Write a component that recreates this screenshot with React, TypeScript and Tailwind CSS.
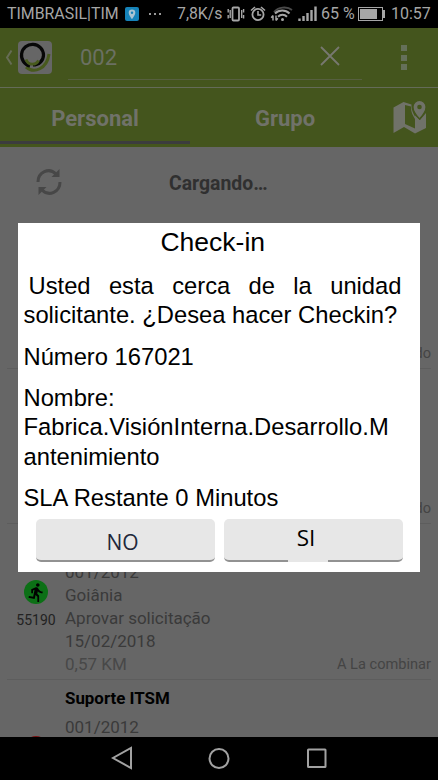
import React from "react";
import { MdDirectionsRun } from "react-icons/md";

function StatusBar() {
  return (
    <div className="flex h-7 shrink-0 items-center bg-black pl-[7px] text-[16px] leading-7 whitespace-nowrap text-[#a6a6a6]">
      <span className="w-[118px] text-[15.900px]">TIMBRASIL|TIM</span>
      <span className="flex h-[14px] w-[14px] items-center justify-center rounded-[2px] bg-[#1683b9]">
        <svg viewBox="0 0 14 14" className="h-[14px] w-[14px]">
          <path d="M7 2.400a3.300 3.300 0 0 0-3.300 3.300C3.700 8.200 7 12 7 12s3.300-3.800 3.300-6.300A3.300 3.300 0 0 0 7 2.400z" fill="#a9c4d2" />
          <circle cx="7" cy="5.700" r="1.200" fill="#1683b9" />
        </svg>
      </span>
      <span className="ml-[10px] flex w-[28px] gap-[3px]">
        <i className="h-[2px] w-[2px] bg-[#999]" />
        <i className="h-[2px] w-[2px] bg-[#999]" />
        <i className="h-[2px] w-[2px] bg-[#999]" />
      </span>
      <span className="w-[50px] text-[15.800px]">7,8K/s</span>
      <svg viewBox="227 4 92 20" className="h-5 w-[92px] shrink-0" fill="none" stroke="#a6a6a6" strokeWidth="1.800">
        <rect x="232.500" y="7.500" width="6.500" height="13" rx="1" />
        <path d="M230.200 10v8M241.700 10v8M228.200 9v3.500M228.200 15v3.500M243.600 9v3.500M243.600 15v3.500" strokeWidth="1.400" />
        <circle cx="258" cy="14.500" r="5.600" />
        <path d="M258 11v4h3.200M251 10.500l4-3.500M265 10.500l-4-3.500" strokeWidth="1.600" />
        <path d="M274 12c4-5 13-6 18-2" stroke="#4a4a4a" />
        <path d="M275 13.500c4-4 10.500-4 14.500 0M278 16.700c2.500-2.500 6.500-2.500 9 0" strokeWidth="2" />
        <circle cx="282.500" cy="19.500" r="1.500" fill="#a6a6a6" stroke="none" />
        <path d="M273 20.500v-5m-1.800 2.300l1.800-2.300M276 15.500v5m0 0l1.800-2.300" strokeWidth="1.500" />
        <path d="M299.500 18.500V21M303.500 16V21M307.500 13v8M311.500 10v11M315.500 6.500V21" strokeWidth="2.400" />
      </svg>
      <span className="ml-[2px] w-[37px] text-[16px]">65 %</span>
      <span className="flex h-[14px] w-[25px] items-center border-[1.500px] border-[#a6a6a6] p-[1px]">
        <span className="h-full w-[17px] bg-[#a6a6a6]" />
      </span>
      <span className="h-[8px] w-[2px] bg-[#a6a6a6]" />
      <span className="ml-[6px]">10:57</span>
    </div>
  );
}

function ActionBar() {
  return (
    <div className="flex h-[60px] shrink-0 border-b border-[#646b58]">
      <svg viewBox="0 0 8 16" className="mt-[21px] ml-[5px] h-[17px] w-[8px]" fill="none" stroke="#666c55" strokeWidth="2">
        <path d="M6.500 1L2 8l4.500 7" />
      </svg>
      <div className="mt-[13px] ml-[5px] h-[33px] w-[34px] rounded-[4px] bg-[#666]">
        <svg viewBox="0 0 34 33" className="h-full w-full" fill="none">
          <path d="M8 26C16 33 29 28 31 13" stroke="#485a1d" strokeWidth="3" />
          <path d="M12 25A11 11 0 1 1 25.500 14c0 6-5 10-10.500 10" stroke="#070707" strokeWidth="3.200" />
          <path d="M8 18.500c2 6 10 6 12.500 1" stroke="#485a1d" strokeWidth="2.800" />
        </svg>
      </div>
      <div className="mt-[14px] ml-[16px] flex h-[38px] w-[294px] items-start justify-between border-b border-[#565f40] pl-[12px]">
        <span className="text-[22px] leading-[32px] text-[#6b7062]">002</span>
        <svg viewBox="0 0 20 20" className="mt-[4px] mr-[22px] h-[20px] w-[20px]" stroke="#777870" strokeWidth="1.800">
          <path d="M1 1l18 18M19 1L1 19" />
        </svg>
      </div>
      <div className="mt-[17px] ml-[39px] flex flex-col gap-[3.500px]">
        <i className="h-[6px] w-[6px] bg-[#65705a]" />
        <i className="h-[6px] w-[6px] bg-[#65705a]" />
        <i className="h-[6px] w-[6px] bg-[#65705a]" />
      </div>
    </div>
  );
}

function Tabs() {
  return (
    <div className="flex h-[59px] shrink-0 text-[22px] font-bold text-[#707269]">
      <div className="flex w-[190px] flex-col justify-between pb-[3px] text-center">
        <span className="mt-[15px] leading-[32px]">Personal</span>
        <span className="h-[3px] bg-[#3c3c3e]" />
      </div>
      <span className="mt-[15px] w-[190px] text-center leading-[32px]">Grupo</span>
      <svg viewBox="0 0 34 34" className="mt-[12px] ml-[13px] h-[34px] w-[34px]">
        <path fill="#707269" d="M0.500 7.500L10.500 2l8 2.500c-.500 5 2.500 10 3.500 12v-1l5 4.500 6-7v15l-11 5.500-11-6.500-10.500 6z" />
        <path d="M12 5l6 1.500v1.500c0 4 2 8 4 11v9.500l-10-4.500z" fill="#44551d" />
        <path fill="#707269" stroke="#44551d" strokeWidth="1.200" d="M26.500.500a6.500 6.500 0 0 0-6.500 6.500c0 5 6.500 12 6.500 12s6.500-7 6.500-12a6.500 6.500 0 0 0-6.500-6.500z" />
        <circle cx="26.500" cy="7" r="2.300" fill="#44551d" />
      </svg>
    </div>
  );
}

type Item = {
  badge?: "green" | "red";
  code?: string;
  title?: string;
  lines: string[];
  distance?: string;
  status?: string;
};

const items: Item[] = [
  { lines: [], status: "do" },
  { lines: [], status: "do" },
  {
    badge: "green",
    code: "55190",
    lines: ["001/2012", "Goiânia", "Aprovar solicitação", "15/02/2018"],
    distance: "0,57 KM",
    status: "A La combinar",
  },
  { badge: "red", title: "Suporte ITSM", lines: ["001/2012"] },
];

function Row({ badge, code, title, lines, distance, status }: Item) {
  return (
    <div className="ml-[7px] flex h-[155.500px] w-[424px] shrink-0 border-b border-[#5d5d5d] text-[#3a3a3a]">
      <div className="flex w-[58px] flex-col items-center pt-[56px]">
        {badge && (
          <span className={badge === "green" ? "flex h-[24px] w-[24px] items-center justify-center rounded-full bg-[#0c7016]" : "flex h-[24px] w-[24px] items-center justify-center rounded-full bg-[#780d0d]"}>
            <MdDirectionsRun className="h-[21px] w-[21px] text-black" />
          </span>
        )}
        <span className="mt-[6px] text-[14px] leading-[20px] text-[#222]">{code}</span>
      </div>
      <div className="flex flex-1 flex-col text-[17px] leading-[23px] whitespace-nowrap">
        <div className="mt-[7px] mb-[6.500px] h-[23px] text-[16.900px] font-bold text-black">{title}</div>
        {lines.map((line) => (
          <span key={line}>{line}</span>
        ))}
        <span className="text-[#484848]">{distance}</span>
      </div>
      <span className="self-end pb-[5px] text-[14.600px] leading-[20px] text-[#444]">{status}</span>
    </div>
  );
}

function CheckinDialog() {
  return (
    <div className="absolute top-[223px] left-[18px] flex h-[349px] w-[402px] flex-col bg-white pl-[5.500px] font-['Liberation_Sans',Arial,sans-serif] text-[23.750px] leading-[29px] text-black">
      <h1 className="mt-[4px] ml-[-18px] text-center text-[26.500px] leading-[30px]">Check-in</h1>
      <div className="mt-[14px] ml-[5px] flex w-[373px] justify-between">
        <span>Usted</span><span>esta</span><span>cerca</span><span>de</span><span>la</span><span>unidad</span>
      </div>
      <p className="whitespace-nowrap">solicitante. ¿Desea hacer Checkin?</p>
      <p className="mt-[13px]">Número 167021</p>
      <p className="mt-[12px] whitespace-nowrap">Nombre:<br />Fabrica.VisiónInterna.Desarrollo.M<br /><span className="relative top-[1px]">antenimiento</span></p>
      <p className="mt-[13px]">SLA Restante 0 Minutos</p>
      <div className="mt-[7px] ml-[12px] flex gap-[9px] font-['Open_Sans',sans-serif]">
        <button className="h-[43px] w-[179px] rounded-[5px] border-b-2 border-[#929292] bg-[#e7e7e7] pt-[5px] pr-[5px] text-[21px] font-medium text-[#22283a]">NO</button>
        <button className="relative h-[43px] w-[179px] rounded-[5px] border-b-2 border-[#929292] bg-[#e7e7e7] pr-[14px] pb-[4px] text-[22.500px] font-medium">
          SI
          <i className="absolute -bottom-[2px] left-[64px] h-[2px] w-[40px] bg-[#e7e7e7]" />
        </button>
      </div>
    </div>
  );
}

export default function App() {
  return (
    <div className="h-[782px] w-[440px] overflow-hidden bg-white">
      <div className="relative flex h-[780px] w-[438px] flex-col overflow-hidden bg-[#44551d] font-[Roboto,sans-serif]">
        <StatusBar />
        <ActionBar />
        <Tabs />
        <main className="flex h-[589.500px] shrink-0 flex-col overflow-hidden bg-[#666]">
          <div className="flex h-[66px] shrink-0">
            <svg viewBox="0 0 26 28" className="mt-[21px] ml-[36px] h-[28px] w-[26px]" fill="none" stroke="#474747" strokeWidth="3">
              <path d="M2 14C2 4 13-1 20 6M24 14c0 10-11 15-18 8" />
              <path d="M23.500 1v8h-8zM2.500 27v-8h8z" fill="#474747" stroke="none" />
            </svg>
            <span className="mt-[24px] ml-[107px] text-[19.400px] leading-[26px] font-bold text-[#303030]">Cargando…</span>
          </div>
          {items.map((item, index) => (
            <Row key={index} {...item} />
          ))}
        </main>
        <nav className="flex flex-1 items-start bg-black pt-[9px]">
          <svg viewBox="0 0 22 24" className="ml-[111px] h-[24px] w-[22px]" fill="none" stroke="#a2a2a2" strokeWidth="2"><path d="M20 2v20L2 12z" /></svg>
          <svg viewBox="0 0 22 24" className="ml-[75px] h-[24px] w-[22px]" fill="none" stroke="#a2a2a2" strokeWidth="2"><circle cx="11" cy="12.500" r="9.500" /></svg>
          <svg viewBox="0 0 22 24" className="ml-[76px] h-[24px] w-[22px]" fill="none" stroke="#a2a2a2" strokeWidth="2"><rect x="2" y="3.500" width="17.500" height="17.500" rx=".5" /></svg>
        </nav>
        <CheckinDialog />
      </div>
    </div>
  );
}
